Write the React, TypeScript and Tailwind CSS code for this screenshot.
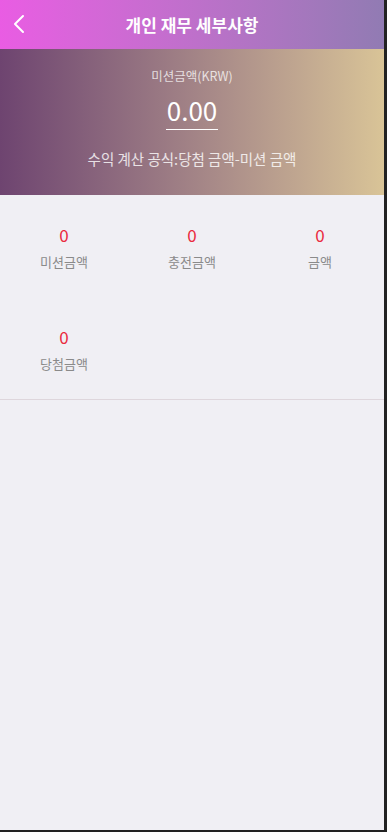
import React from "react";

const items = [
  { v: "0", l: "미션금액" },
  { v: "0", l: "충전금액" },
  { v: "0", l: "금액" },
  { v: "0", l: "당첨금액" },
];

export default function App() {
  return (
    <div
      className="w-[387px] h-[832px] bg-[#222222] overflow-hidden"
      style={{ fontFamily: '"Noto Sans CJK KR", "Noto Sans", sans-serif' }}
    >
      <div className="w-[384px] h-[830px] bg-[#f0eff4] flex flex-col">
        <div className="h-[49px] flex items-center relative bg-gradient-to-r from-[#e95ce3] to-[#917bb3]">
          <div className="absolute left-[12px] top-[13px]">
            <svg width="14" height="22" viewBox="0 0 14 22" fill="none">
              <path d="M11 3 L3 11 L11 19" stroke="white" strokeWidth="2" strokeLinecap="round" strokeLinejoin="round" />
            </svg>
          </div>
          <div className="w-full text-center text-white text-[17px] font-bold leading-[24px]">개인 재무 세부사항</div>
        </div>
        <div className="h-[146px] flex flex-col items-center bg-gradient-to-r from-[#6e4470] to-[#d9c497]">
          <div className="mt-[18px] text-[12.5px] leading-[18px] text-white/75">미션금액(KRW)</div>
          <div className="mt-[10px] text-[26px] leading-[30px] text-white border-b border-white px-[1px] pb-[4px]">0.00</div>
          <div className="mt-[19px] text-[14.5px] leading-[20px] text-white/80">수익 계산 공식:당첨 금액-미션 금액</div>
        </div>
        <div className="grid grid-cols-3 border-b border-[#ded6dc]">
          {items.map((it, i) => (
            <div key={i} className="h-[102px] flex flex-col items-center pt-[30px]">
              <div className="text-[17px] leading-[20px] text-[#ea2a3e]">{it.v}</div>
              <div className="mt-[7px] text-[13px] leading-[20px] text-[#8a8a8a]">{it.l}</div>
            </div>
          ))}
        </div>
      </div>
    </div>
  );
}
